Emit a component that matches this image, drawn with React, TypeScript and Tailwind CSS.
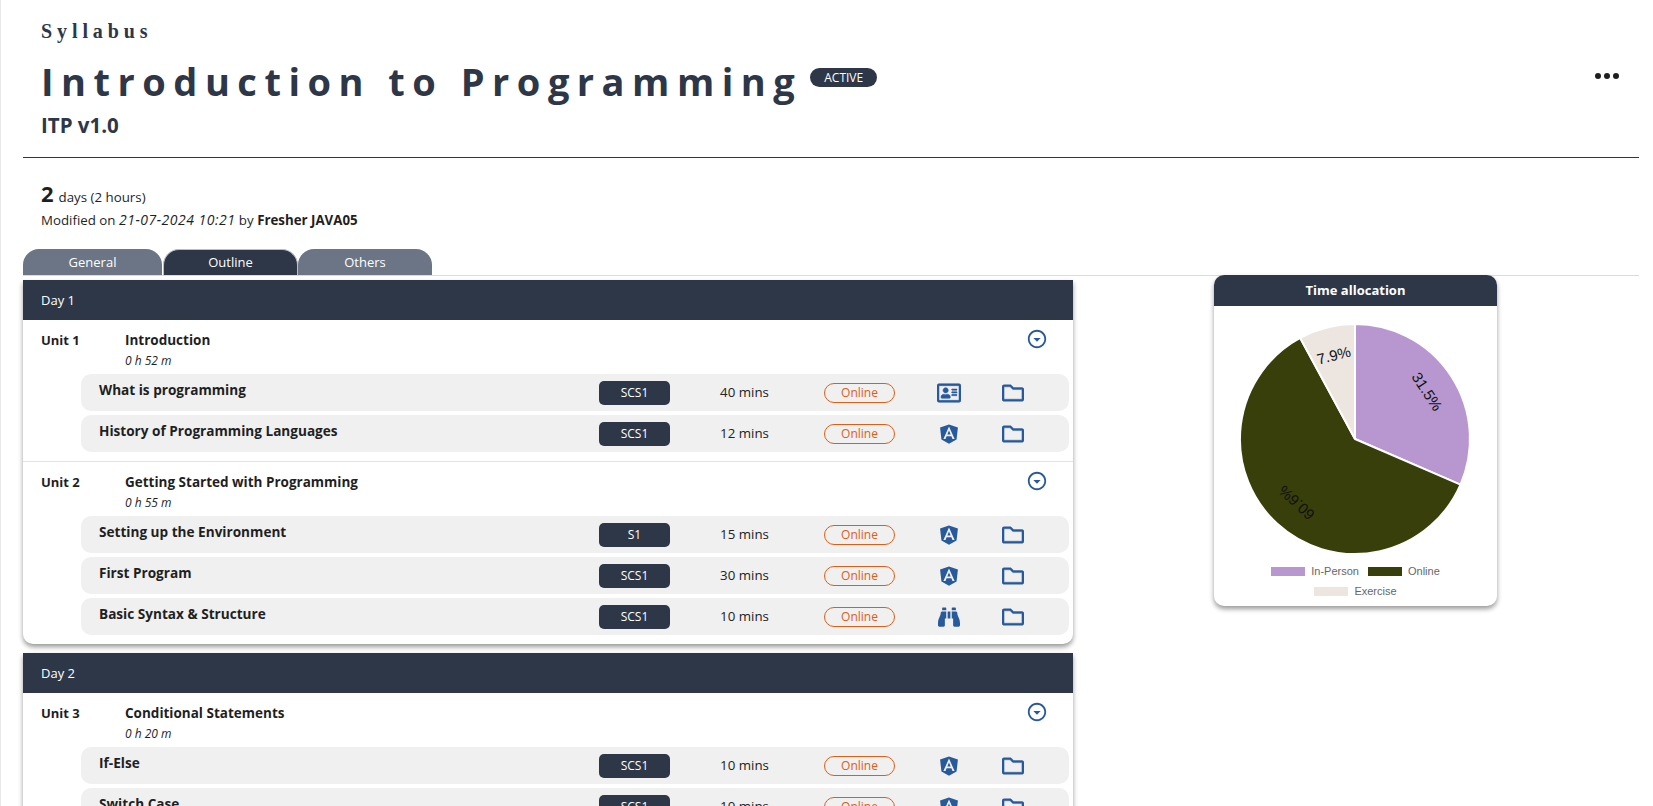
import { FaAngular, FaBinoculars, FaRegFolder, FaRegAddressCard } from "react-icons/fa";
import { MdOutlineArrowDropDownCircle } from "react-icons/md";

type Lesson = {
  name: string;
  code: string;
  mins: number;
  icon: "card" | "angular" | "binoculars";
};

type Unit = {
  label: string;
  title: string;
  time: string;
  lessons: Lesson[];
};

const day1: Unit[] = [
  {
    label: "Unit 1",
    title: "Introduction",
    time: "0 h 52 m",
    lessons: [
      { name: "What is programming", code: "SCS1", mins: 40, icon: "card" },
      { name: "History of Programming Languages", code: "SCS1", mins: 12, icon: "angular" },
    ],
  },
  {
    label: "Unit 2",
    title: "Getting Started with Programming",
    time: "0 h 55 m",
    lessons: [
      { name: "Setting up the Environment", code: "S1", mins: 15, icon: "angular" },
      { name: "First Program", code: "SCS1", mins: 30, icon: "angular" },
      { name: "Basic Syntax & Structure", code: "SCS1", mins: 10, icon: "binoculars" },
    ],
  },
];

const day2: Unit[] = [
  {
    label: "Unit 3",
    title: "Conditional Statements",
    time: "0 h 20 m",
    lessons: [
      { name: "If-Else", code: "SCS1", mins: 10, icon: "angular" },
      { name: "Switch Case", code: "SCS1", mins: 10, icon: "angular" },
    ],
  },
];

const LessonIcon = ({ icon }: { icon: Lesson["icon"] }) => {
  if (icon === "card") return <FaRegAddressCard className="w-[24px] h-[24px] stroke-current stroke-[12]" />;
  if (icon === "binoculars") return <FaBinoculars className="w-[22px] h-[22px]" />;
  return <FaAngular className="w-[22px] h-[22px]" />;
};

const LessonRow = ({ lesson }: { lesson: Lesson }) => (
  <div className="flex items-center h-[37px] ml-[58px] mr-[4px] pl-[18px] bg-[#f0f0f0] rounded-[10px] text-[13.3px]">
    <div className="w-[500px] -mt-[4px] font-bold text-[13.6px] text-[#1f1f1f]">{lesson.name}</div>
    <div className="w-[71px] h-[24px] flex items-center justify-center rounded-[5px] bg-[#2d3748] text-white text-[12px]">
      {lesson.code}
    </div>
    <div className="w-[154px] pr-[5px] text-center text-[#222]">{lesson.mins} mins</div>
    <div className="w-[71px] h-[20px] flex items-center justify-center rounded-full border border-[#d9601a] text-[#d9601a] text-[12px]">
      Online
    </div>
    <div className="w-[108px] flex justify-center text-[#285a9b]">
      <LessonIcon icon={lesson.icon} />
    </div>
    <FaRegFolder className="w-[22px] h-[22px] -ml-[1px] text-[#285a9b] stroke-current stroke-[10]" />
  </div>
);

const UnitBlock = ({ unit, last }: { unit: Unit; last: boolean }) => (
  <div className={last ? "pb-[9px]" : "pb-[9px] border-b border-[#e2e2e2]"}>
    <div className="flex pl-[18px] pr-[25px] pt-[10px] pb-[3px] text-[#1f1f1f]">
      <div className="w-[84px] text-[13px] font-bold leading-[20px]">{unit.label}</div>
      <div className="flex-1">
        <div className="text-[13.5px] font-bold leading-[20px]">{unit.title}</div>
        <div className="text-[12px] italic leading-[21px]">{unit.time}</div>
      </div>
      <MdOutlineArrowDropDownCircle className="w-[22px] h-[22px] -mt-[2px] text-[#285a9b]" />
    </div>
    <div className="flex flex-col gap-[4px]">
      {unit.lessons.map((l) => (
        <LessonRow key={l.name} lesson={l} />
      ))}
    </div>
  </div>
);

const DayCard = ({ title, units }: { title: string; units: Unit[] }) => (
  <div className="bg-white rounded-b-[10px] shadow-[0_3px_5px_rgba(0,0,0,0.4)]">
    <div className="h-[40px] flex items-center pl-[18px] pt-px bg-[#2d3748] text-white text-[13px]">{title}</div>
    {units.map((u, i) => (
      <UnitBlock key={u.label} unit={u} last={i === units.length - 1} />
    ))}
  </div>
);

const TimeChart = () => (
  <svg width="280" height="236" viewBox="1 0 280 236" className="block">
    <path d="M140 119 L140 4 A115 115 0 0 1 245.5 164.7 Z" fill="#b897d0" stroke="#fff" strokeWidth="2" />
    <path d="M140 119 L245.5 164.7 A115 115 0 1 1 85.2 17.9 Z" fill="#383f0a" stroke="#fff" strokeWidth="2" />
    <path d="M140 119 L85.2 17.9 A115 115 0 0 1 140 4 Z" fill="#ede5e0" stroke="#fff" strokeWidth="2" />
    <g fontFamily="'Liberation Sans', sans-serif" fontSize="15" fill="#111" textAnchor="middle" dominantBaseline="middle">
      <text transform="translate(211 72.3) rotate(56.7)">31.5%</text>
      <text transform="translate(82.5 181.7) rotate(222.5)">60.6%</text>
      <text transform="translate(119.1 36.6) rotate(-14.2)">7.9%</text>
    </g>
  </svg>
);

const LegendItem = ({ color, label }: { color: string; label: string }) => (
  <div className="flex items-center gap-[6px]">
    <div className={`w-[34px] h-[9px] ${color}`} />
    <span>{label}</span>
  </div>
);

export default function App() {
  return (
    <div className="h-screen overflow-hidden bg-white border-l border-[#e8e8e8] font-['Open_Sans','Noto_Sans',sans-serif] text-[#1f1f1f]">
      <div className="pl-[22px] pr-[14px]">
        {/* Title block */}
        <div className="pl-[18px] pt-[19px] h-[158px] border-b border-[#2d3748] flex justify-between">
          <div>
            <div className="font-['Liberation_Serif',serif] font-bold text-[20px] leading-[24px] tracking-[4.9px] text-[#2d3748]">
              Syllabus
            </div>
            <div className="flex items-start mt-[11px]">
              <h1 className="text-[38px] leading-[54px] font-bold tracking-[7.5px] text-[#2d3748]">
                Introduction to Programming
              </h1>
              <span className="mt-[14px] ml-[8px] h-[19px] px-[14px] flex items-center rounded-full bg-[#2d3748] text-white text-[12px]">
                ACTIVE
              </span>
            </div>
            <div className="text-[20.5px] font-bold leading-[28px] mt-[3px] text-[#2d3748]">ITP v1.0</div>
          </div>
          <div className="flex gap-[3px] mt-[54px] mr-[20px]">
            <span className="w-[6px] h-[6px] rounded-full bg-[#1f1f1f]" />
            <span className="w-[6px] h-[6px] rounded-full bg-[#1f1f1f]" />
            <span className="w-[6px] h-[6px] rounded-full bg-[#1f1f1f]" />
          </div>
        </div>

        {/* Duration */}
        <div className="pl-[18px] pt-[22px]">
          <div className="leading-[27px]">
            <span className="text-[22px] font-bold">2</span>
            <span className="text-[13.3px] ml-[5px]">days (2 hours)</span>
          </div>
          <div className="text-[13.3px] leading-[18px]">
            Modified on <i className="text-[14px] tracking-[0.5px]">21-07-2024 10:21</i> by <b>Fresher JAVA05</b>
          </div>
        </div>

        {/* Tabs */}
        <div className="flex mt-[20px] h-[27px] border-b border-[#dcdcdc] text-[13px] text-white">
          <div className="w-[139px] pt-px flex items-center justify-center rounded-t-[16px] bg-[#6b7585]">General</div>
          <div className="w-[135px] ml-px flex items-center justify-center rounded-t-[16px] bg-[#2d3748] border-t border-x border-[#b8bec8]">
            Outline
          </div>
          <div className="w-[134px] pt-px flex items-center justify-center rounded-t-[16px] bg-[#6b7585]">Others</div>
        </div>

        {/* Outline + chart */}
        <div className="flex mt-[4px] items-start">
          <div className="w-[1050px] flex flex-col gap-[9px]">
            <DayCard title="Day 1" units={day1} />
            <DayCard title="Day 2" units={day2} />
          </div>
          <div className="ml-[141px] -mt-[5px] w-[283px] bg-white rounded-[10px] shadow-[0_3px_5px_rgba(0,0,0,0.4)]">
            <div className="h-[31px] pt-px flex items-center justify-center rounded-t-[10px] bg-[#2d3748] text-white text-[13px] font-bold">
              Time allocation
            </div>
            <div className="pt-[14px] flex justify-center">
              <TimeChart />
            </div>
            <div className="flex flex-wrap justify-center gap-x-[9px] gap-y-[5px] pt-[8px] pb-[7px] px-[40px] font-['Liberation_Sans',sans-serif] text-[11px] leading-[15px] text-[#666]">
              <LegendItem color="bg-[#b897d0]" label="In-Person" />
              <LegendItem color="bg-[#383f0a]" label="Online" />
              <LegendItem color="bg-[#ede5e0]" label="Exercise" />
            </div>
          </div>
        </div>
      </div>
    </div>
  );
}
